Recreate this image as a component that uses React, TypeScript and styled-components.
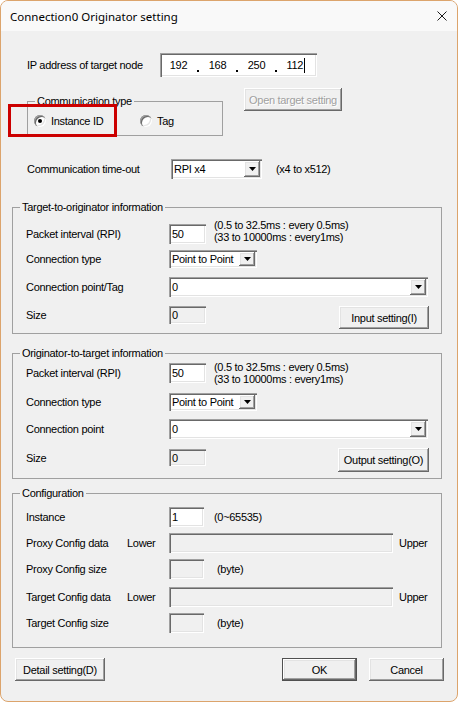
import React from 'react';
import styled, { createGlobalStyle, css } from 'styled-components';

const GlobalStyle = createGlobalStyle`
  html, body { margin: 0; padding: 0; background: #ffffff; }
  * { box-sizing: border-box; }
`;

const sunken = css`
  box-shadow: inset 1px 1px #a0a0a0, inset 2px 2px #696969, inset -1px -1px #ffffff, inset -2px -2px #e3e3e3;
`;

const raised = css`
  box-shadow: inset -1px -1px #696969, inset 1px 1px #ffffff, inset -2px -2px #a0a0a0, inset 2px 2px #e3e3e3;
`;

const Window = styled.div`
  position: relative;
  width: 458px;
  height: 702px;
  border: 1px solid #dca46c;
  border-radius: 8px;
  overflow: hidden;
  background: #f0f0f0;
  display: flex;
  flex-direction: column;
  font-family: "Liberation Sans", Arial, sans-serif;
  font-size: 11px;
  letter-spacing: -0.3px;
  color: #000;
`;

const TitleBar = styled.div`
  height: 30px;
  flex: none;
  display: flex;
  align-items: center;
  padding: 0 10px 0 9px;
  background: #f9f9f9;
  font-family: "Noto Sans", "Open Sans", sans-serif;
  font-size: 11.5px;
  letter-spacing: 0;
`;

const Title = styled.span`
  flex: 1;
`;

const Row = styled.div<{ $mt: number; $h?: number; $pl?: number; $align?: string }>`
  display: flex;
  flex: none;
  align-items: ${(p) => p.$align ?? 'center'};
  margin-top: ${(p) => p.$mt}px;
  height: ${(p) => (p.$h ? `${p.$h}px` : 'auto')};
  padding-left: ${(p) => p.$pl ?? 0}px;
`;

const Label = styled.span<{ $w?: number; $lh?: number }>`
  flex: none;
  width: ${(p) => (p.$w ? `${p.$w}px` : 'auto')};
  white-space: nowrap;
  line-height: ${(p) => (p.$lh ? `${p.$lh}px` : 'normal')};
`;

const Note = styled.span<{ $ml: number }>`
  margin-left: ${(p) => p.$ml}px;
  white-space: nowrap;
`;

const NoteBlock = styled.div<{ $ml: number; $mt: number }>`
  align-self: flex-start;
  margin-left: ${(p) => p.$ml}px;
  margin-top: ${(p) => p.$mt}px;
  line-height: 11.5px;
  white-space: nowrap;
`;

const TextBox = styled.div<{ $w: number; $h: number; $disabled?: boolean; $mt?: number }>`
  flex: none;
  width: ${(p) => p.$w}px;
  height: ${(p) => p.$h}px;
  margin-top: ${(p) => p.$mt ?? 0}px;
  background: ${(p) => (p.$disabled ? '#f0f0f0' : '#ffffff')};
  ${sunken};
  display: flex;
  align-items: center;
  padding-left: 3px;
`;

const IpBox = styled.div`
  flex: none;
  width: 157px;
  height: 24px;
  background: #ffffff;
  ${sunken};
  display: flex;
  align-items: stretch;
  padding-left: 5px;
`;

const IpNum = styled.span`
  width: 27px;
  display: flex;
  align-items: center;
  justify-content: center;
`;

const IpDotCell = styled.span`
  width: 12px;
  display: flex;
  justify-content: center;
  align-items: flex-end;
  padding-bottom: 5px;
`;

const IpDot = styled.span`
  width: 2px;
  height: 2px;
  background: #000;
`;

const Caret = styled.span`
  display: inline-block;
  width: 1px;
  height: 15px;
  background: #000;
  margin-left: 0.5px;
`;

const ComboBox = styled.div<{ $w: number; $h: number }>`
  flex: none;
  width: ${(p) => p.$w}px;
  height: ${(p) => p.$h}px;
  background: #ffffff;
  ${sunken};
  display: flex;
  align-items: stretch;
  padding: 2px;
`;

const ComboText = styled.span`
  flex: 1;
  padding-left: 1px;
  display: flex;
  align-items: center;
  overflow: hidden;
  white-space: nowrap;
`;

const DropButton = styled.span`
  flex: none;
  width: 16px;
  background: #f0f0f0;
  ${raised};
  display: flex;
  align-items: center;
  justify-content: center;
`;

const Button = styled.button<{ $w: number; $h: number; $default?: boolean; $ml?: number | 'auto'; $disabled?: boolean }>`
  flex: none;
  width: ${(p) => p.$w}px;
  height: ${(p) => p.$h}px;
  margin: 0 0 0 ${(p) => (p.$ml === 'auto' ? 'auto' : `${p.$ml ?? 0}px`)};
  padding: 0;
  border: none;
  border-radius: 0;
  background: #f0f0f0;
  font: inherit;
  letter-spacing: inherit;
  color: ${(p) => (p.$disabled ? '#a0a0a0' : '#000')};
  text-shadow: ${(p) => (p.$disabled ? '1px 1px 0 #ffffff' : 'none')};
  ${(p) =>
    p.$default
      ? css`
          box-shadow: inset 0 0 0 1px #505050, inset -2px -2px #696969, inset 2px 2px #ffffff,
            inset -3px -3px #a0a0a0, inset 3px 3px #e3e3e3;
        `
      : raised};
`;

const Group = styled.fieldset<{ $mt: number }>`
  flex: none;
  margin: ${(p) => p.$mt}px 15px 0 11px;
  padding: 0;
  border: 1px solid #a0a0a0;
  min-width: 0;
`;

const CommGroup = styled(Group)`
  margin: ${(p) => p.$mt}px 0 0 0;
  width: 196px;
`;

const Legend = styled.legend`
  margin-left: 7px;
  padding: 0 2px;
  height: 13px;
  line-height: 13px;
  white-space: nowrap;
`;

const GroupBody = styled.div<{ $pb: number; $pt?: number }>`
  display: flex;
  flex-direction: column;
  padding: ${(p) => p.$pt ?? 0}px 12px ${(p) => p.$pb}px 13px;
`;

const RadioRow = styled.div`
  display: flex;
  align-items: center;
  height: 12px;
  margin: 7px 0 8px 0;
  padding-left: 6px;
`;

const RadioItem = styled.label<{ $w?: number }>`
  display: flex;
  align-items: center;
  gap: 5px;
  width: ${(p) => (p.$w ? `${p.$w}px` : 'auto')};
`;

const RadioCircle = styled.span`
  flex: none;
  width: 12px;
  height: 12px;
  border-radius: 50%;
  background: #ffffff;
  box-shadow: inset 1px 1px #a0a0a0, inset 2px 2px #696969, inset -1px -1px #ffffff, inset -2px -2px #e3e3e3;
  display: flex;
  align-items: center;
  justify-content: center;
`;

const RadioDot = styled.span`
  width: 4px;
  height: 4px;
  border-radius: 50%;
  background: #000;
`;

const Annotation = styled.div`
  position: absolute;
  left: 7px;
  top: 103px;
  width: 109px;
  height: 33px;
  border: 3px solid #cc0000;
  pointer-events: none;
`;

const ButtonBar = styled.div`
  display: flex;
  align-items: center;
  height: 23px;
  margin-top: 10px;
  padding: 0 13px 0 14px;
  flex: none;
`;

const CloseIcon = () => (
  <svg width="10" height="10" viewBox="0 0 10 10">
    <path d="M0.5 0.5 L9.5 9.5 M9.5 0.5 L0.5 9.5" stroke="#1a1a1a" strokeWidth="1" />
  </svg>
);

const Arrow = () => (
  <svg width="7" height="4" viewBox="0 0 7 4">
    <path d="M0 0 H7 L3.5 4 Z" fill="#000" />
  </svg>
);

const Combo = ({ w, h, value }: { w: number; h: number; value: string }) => (
  <ComboBox $w={w} $h={h}>
    <ComboText>{value}</ComboText>
    <DropButton>
      <Arrow />
    </DropButton>
  </ComboBox>
);

const Radio = ({ label, checked, w }: { label: string; checked?: boolean; w?: number }) => (
  <RadioItem $w={w}>
    <RadioCircle>{checked && <RadioDot />}</RadioCircle>
    <span>{label}</span>
  </RadioItem>
);

const RpiNote = ({ mt }: { mt: number }) => (
  <NoteBlock $ml={8} $mt={mt}>
    <div>(0.5 to 32.5ms : every 0.5ms)</div>
    <div>(33 to 10000ms : every1ms)</div>
  </NoteBlock>
);

export default function App() {
  return (
    <>
      <GlobalStyle />
      <Window>
        <TitleBar>
          <Title>Connection0 Originator setting</Title>
          <CloseIcon />
        </TitleBar>

        <Row $mt={22} $pl={26}>
          <Label $w={133}>IP address of target node</Label>
          <IpBox>
            <IpNum>192</IpNum>
            <IpDotCell><IpDot /></IpDotCell>
            <IpNum>168</IpNum>
            <IpDotCell><IpDot /></IpDotCell>
            <IpNum>250</IpNum>
            <IpDotCell><IpDot /></IpDotCell>
            <IpNum>
              112
              <Caret />
            </IpNum>
          </IpBox>
        </Row>

        <Row $mt={11} $pl={26} $align="flex-start">
          <CommGroup $mt={7}>
            <Legend>Communication type</Legend>
            <RadioRow>
              <Radio label="Instance ID" checked w={106} />
              <Radio label="Tag" />
            </RadioRow>
          </CommGroup>
          <Button $w={98} $h={23} $ml={21} $disabled>
            Open target setting
          </Button>
        </Row>

        <Row $mt={23} $h={20} $pl={26}>
          <Label $w={144}>Communication time-out</Label>
          <Combo w={91} h={20} value="RPI x4" />
          <Note $ml={14}>(x4 to x512)</Note>
        </Row>

        <Group $mt={22}>
          <Legend>Target-to-originator information</Legend>
          <GroupBody $pb={4}>
            <Row $mt={10} $h={20}>
              <Label $w={143}>Packet interval (RPI)</Label>
              <TextBox $w={37} $h={20}>50</TextBox>
              <RpiNote mt={-4} />
            </Row>
            <Row $mt={6} $h={18}>
              <Label $w={143}>Connection type</Label>
              <Combo w={88} h={18} value="Point to Point" />
            </Row>
            <Row $mt={9} $h={20}>
              <Label $w={143}>Connection point/Tag</Label>
              <Combo w={259} h={20} value="0" />
            </Row>
            <Row $mt={9} $h={23} $align="flex-start">
              <Label $w={143} $lh={18}>Size</Label>
              <TextBox $w={37} $h={18} $disabled>0</TextBox>
              <Button $w={90} $h={23} $ml="auto">Input setting(I)</Button>
            </Row>
          </GroupBody>
        </Group>

        <Group $mt={13}>
          <Legend>Originator-to-target information</Legend>
          <GroupBody $pb={6}>
            <Row $mt={3} $h={20}>
              <Label $w={143}>Packet interval (RPI)</Label>
              <TextBox $w={37} $h={20}>50</TextBox>
              <RpiNote mt={-1} />
            </Row>
            <Row $mt={10} $h={18}>
              <Label $w={143}>Connection type</Label>
              <Combo w={88} h={18} value="Point to Point" />
            </Row>
            <Row $mt={8} $h={20}>
              <Label $w={143}>Connection point</Label>
              <Combo w={259} h={20} value="0" />
            </Row>
            <Row $mt={9} $h={24} $align="flex-start">
              <Label $w={143} $lh={20}>Size</Label>
              <TextBox $w={37} $h={17} $mt={1} $disabled>0</TextBox>
              <Button $w={91} $h={24} $ml="auto">Output setting(O)</Button>
            </Row>
          </GroupBody>
        </Group>

        <Group $mt={8}>
          <Legend>Configuration</Legend>
          <GroupBody $pb={14}>
            <Row $mt={7} $h={20}>
              <Label $w={143}>Instance</Label>
              <TextBox $w={35} $h={20}>1</TextBox>
              <Note $ml={10}>(0~65535)</Note>
            </Row>
            <Row $mt={6} $h={20}>
              <Label $w={101}>Proxy Config data</Label>
              <Label $w={42}>Lower</Label>
              <TextBox $w={224} $h={20} $disabled />
              <Note $ml={6}>Upper</Note>
            </Row>
            <Row $mt={6} $h={20}>
              <Label $w={143}>Proxy Config size</Label>
              <TextBox $w={35} $h={20} $disabled />
              <Note $ml={13}>(byte)</Note>
            </Row>
            <Row $mt={8} $h={20}>
              <Label $w={101}>Target Config data</Label>
              <Label $w={42}>Lower</Label>
              <TextBox $w={224} $h={20} $disabled />
              <Note $ml={6}>Upper</Note>
            </Row>
            <Row $mt={6} $h={20}>
              <Label $w={143}>Target Config size</Label>
              <TextBox $w={35} $h={20} $disabled />
              <Note $ml={13}>(byte)</Note>
            </Row>
          </GroupBody>
        </Group>

        <ButtonBar>
          <Button $w={90} $h={23}>Detail setting(D)</Button>
          <Button $w={75} $h={23} $ml="auto" $default>OK</Button>
          <Button $w={75} $h={23} $ml={12}>Cancel</Button>
        </ButtonBar>

        <Annotation />
      </Window>
    </>
  );
}
